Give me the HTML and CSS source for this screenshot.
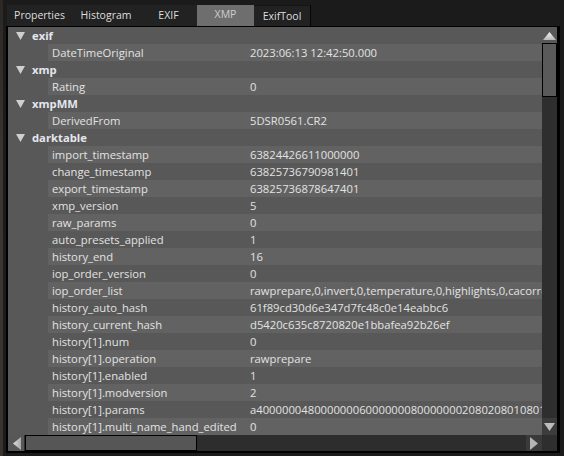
FILE: index.html
```html
<!DOCTYPE html>
<html>
<head>
<meta charset="utf-8">
<link rel="stylesheet" href="styles.css">
</head>
<body>
<div class="window">
  <div class="edge"></div>
  <div class="main">
    <div class="tabbar">
      <div class="tab tab--w65">Properties</div>
      <div class="tab tab--w68">Histogram</div>
      <div class="tab">EXIF</div>
      <div class="tab tab--active">XMP</div>
      <div class="tab tab--last">ExifTool</div>
    </div>
    <div class="panel">
      <div class="body">
        <div class="view">
          <div class="row row--head"><span class="tri"><svg width="9" height="9" viewBox="0 0 9 9"><polygon points="0,1 9,1 4.5,9" fill="#cfcfcf"/></svg></span><span class="head">exif</span></div>
          <div class="row"><span class="indent"></span><span class="rest"><span class="key">DateTimeOriginal</span><span class="val">2023:06:13 12:42:50.000</span></span></div>
          <div class="row row--head"><span class="tri"><svg width="9" height="9" viewBox="0 0 9 9"><polygon points="0,1 9,1 4.5,9" fill="#cfcfcf"/></svg></span><span class="head">xmp</span></div>
          <div class="row"><span class="indent"></span><span class="rest"><span class="key">Rating</span><span class="val">0</span></span></div>
          <div class="row row--head"><span class="tri"><svg width="9" height="9" viewBox="0 0 9 9"><polygon points="0,1 9,1 4.5,9" fill="#cfcfcf"/></svg></span><span class="head">xmpMM</span></div>
          <div class="row"><span class="indent"></span><span class="rest"><span class="key">DerivedFrom</span><span class="val">5DSR0561.CR2</span></span></div>
          <div class="row row--head"><span class="tri"><svg width="9" height="9" viewBox="0 0 9 9"><polygon points="0,1 9,1 4.5,9" fill="#cfcfcf"/></svg></span><span class="head">darktable</span></div>
          <div class="row"><span class="indent"></span><span class="rest"><span class="key">import_timestamp</span><span class="val">63824426611000000</span></span></div>
          <div class="row"><span class="indent"></span><span class="rest"><span class="key">change_timestamp</span><span class="val">63825736790981401</span></span></div>
          <div class="row"><span class="indent"></span><span class="rest"><span class="key">export_timestamp</span><span class="val">63825736878647401</span></span></div>
          <div class="row"><span class="indent"></span><span class="rest"><span class="key">xmp_version</span><span class="val">5</span></span></div>
          <div class="row"><span class="indent"></span><span class="rest"><span class="key">raw_params</span><span class="val">0</span></span></div>
          <div class="row"><span class="indent"></span><span class="rest"><span class="key">auto_presets_applied</span><span class="val">1</span></span></div>
          <div class="row"><span class="indent"></span><span class="rest"><span class="key">history_end</span><span class="val">16</span></span></div>
          <div class="row"><span class="indent"></span><span class="rest"><span class="key">iop_order_version</span><span class="val">0</span></span></div>
          <div class="row"><span class="indent"></span><span class="rest"><span class="key">iop_order_list</span><span class="val">rawprepare,0,invert,0,temperature,0,highlights,0,cacorrect,0,hotpixels,0,rawdenoise,0,demosaic,0</span></span></div>
          <div class="row"><span class="indent"></span><span class="rest"><span class="key">history_auto_hash</span><span class="val">61f89cd30d6e347d7fc48c0e14eabbc6</span></span></div>
          <div class="row"><span class="indent"></span><span class="rest"><span class="key">history_current_hash</span><span class="val">d5420c635c8720820e1bbafea92b26ef</span></span></div>
          <div class="row"><span class="indent"></span><span class="rest"><span class="key">history[1].num</span><span class="val">0</span></span></div>
          <div class="row"><span class="indent"></span><span class="rest"><span class="key">history[1].operation</span><span class="val">rawprepare</span></span></div>
          <div class="row"><span class="indent"></span><span class="rest"><span class="key">history[1].enabled</span><span class="val">1</span></span></div>
          <div class="row"><span class="indent"></span><span class="rest"><span class="key">history[1].modversion</span><span class="val">2</span></span></div>
          <div class="row"><span class="indent"></span><span class="rest"><span class="key">history[1].params</span><span class="val">a40000004800000006000000080000000208020801080108800000000</span></span></div>
          <div class="row"><span class="indent"></span><span class="rest"><span class="key">history[1].multi_name_hand_edited</span><span class="val">0</span></span></div>
        </div>
        <div class="vscroll">
          <div class="arrow arrow--up"><svg width="13" height="8" viewBox="0 0 13 8"><defs><linearGradient id="gu" x1="0" y1="0" x2="0" y2="1"><stop offset="0" stop-color="#f2f2f2"/><stop offset="1" stop-color="#b8b8b8"/></linearGradient></defs><polygon points="6.5,0 13,8 0,8" fill="url(#gu)"/></svg></div>
          <div class="vthumb"></div>
          <div class="vtrack"></div>
          <div class="arrow arrow--down"><svg width="11" height="8" viewBox="0 0 11 8"><polygon points="0,0 11,0 5.5,8" fill="#bdbdbd"/></svg></div>
        </div>
      </div>
      <div class="hbar">
        <div class="hscroll">
          <div class="harrow harrow--left"><svg width="8" height="13" viewBox="0 0 8 13"><defs><linearGradient id="gl" x1="0" y1="0" x2="1" y2="0"><stop offset="0" stop-color="#e0e0e0"/><stop offset="1" stop-color="#a8a8a8"/></linearGradient></defs><polygon points="0,6.5 8,0 8,13" fill="url(#gl)"/></svg></div>
          <div class="hthumb"></div>
          <div class="htrack"></div>
          <div class="harrow harrow--right"><svg width="8" height="13" viewBox="0 0 8 13"><polygon points="0,0 8,6.5 0,13" fill="#b4b4b4"/></svg></div>
        </div>
        <div class="corner"></div>
      </div>
    </div>
  </div>
</div>
</body>
</html>
```

FILE: styles.css
```css
* { box-sizing: border-box; }
html, body {
  margin: 0;
  padding: 0;
  background: #1b1b1b;
  width: 564px;
  height: 456px;
  overflow: hidden;
}
body {
  font-family: "Open Sans", "Noto Sans", "Liberation Sans", sans-serif;
  font-size: 11.25px;
  color: #e2e2e2;
}
.window {
  display: flex;
  height: 456px;
}
.edge {
  width: 3px;
  background: linear-gradient(to bottom, #2c2825, #3d3530 40%, #3a322c);
  flex: none;
}
.main {
  display: flex;
  flex-direction: column;
  padding-left: 3px;
  width: 557px;
}
.tabbar {
  height: 26px;
  display: flex;
  align-items: flex-end;
  padding-left: 1px;
  background: #1b1b1b;
}
.tab {
  height: 21px;
  width: 57px;
  display: flex;
  align-items: center;
  justify-content: center;
  background: #222222;
  color: #dedede;
  font-size: 10.5px;
  padding-bottom: 1px;
}
.tab--w65 { width: 65px; }
.tab--w68 { width: 68px; }
.tab--active {
  background: #6e6e6e;
  color: #cfcfcf;
  padding-bottom: 4px;
}
.tab--last {
  border-right: 1px solid #050505;
  border-top: 1px solid #141414;
}
.panel {
  width: 554px;
  border: solid #000;
  border-width: 1px 3px 2px 2px;
  display: flex;
  flex-direction: column;
}
.body {
  display: flex;
  height: 408px;
}
.view {
  width: 534px;
  overflow: hidden;
  flex: none;
}
.row {
  height: 17px;
  line-height: 17px;
  display: flex;
  background: #585858;
  white-space: nowrap;
}
.row--head {
  align-items: center;
}
.tri {
  width: 24px;
  padding-left: 8px;
  display: flex;
  align-items: center;
  height: 17px;
}
.head {
  font-weight: bold;
  color: #e4e6ee;
}
.indent {
  width: 40px;
  flex: none;
}
.rest {
  display: flex;
  flex: 1;
}
.row:nth-child(even) .rest {
  background: #626262;
}
.key {
  width: 202px;
  padding-left: 4px;
  flex: none;
  overflow: hidden;
}
.val {
  flex: none;
}
.vscroll {
  width: 15px;
  display: flex;
  flex-direction: column;
  background: #2e2e2e;
}
.arrow {
  height: 16px;
  display: flex;
  align-items: center;
  justify-content: center;
  flex: none;
}
.arrow--up {
  background: #585858;
  padding-top: 2px;
}
.arrow--down {
  background: #3c3c3c;
  height: 17px;
  margin-top: auto;
}
.vthumb {
  height: 54px;
  border: 1px solid #000;
  background: #5a5a5a;
  flex: none;
}
.vtrack { flex: 1; }
.hbar {
  display: flex;
  height: 16px;
}
.hscroll {
  width: 534px;
  display: flex;
  background: #2d2d2d;
}
.harrow {
  width: 16px;
  display: flex;
  align-items: center;
  justify-content: center;
  flex: none;
}
.harrow--left {
  background: #575757;
  padding-left: 1px;
}
.harrow--right {
  background: #3a3a3a;
  margin-left: auto;
}
.hthumb {
  width: 172px;
  margin-left: 1px;
  border: 1px solid #000;
  background: #565656;
  flex: none;
}
.htrack { flex: 1; }
.corner {
  width: 15px;
  background: #2e2e2e;
}
```
